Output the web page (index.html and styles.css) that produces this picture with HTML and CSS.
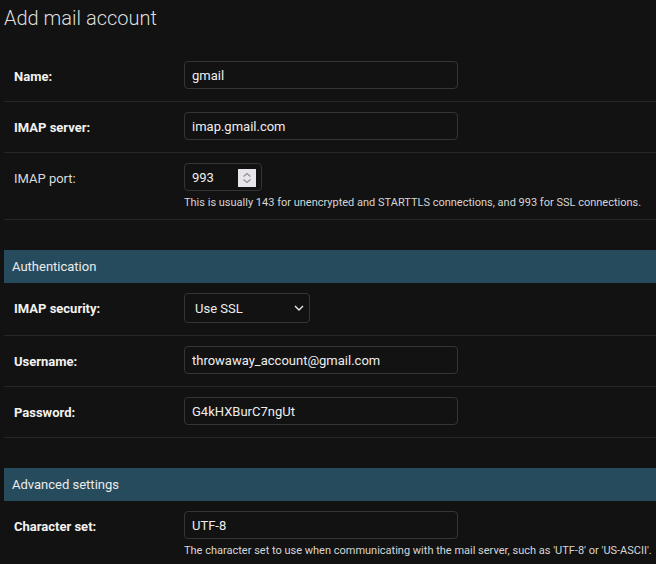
FILE: index.html
```html
<!DOCTYPE html>
<html lang="en">
<head>
<meta charset="utf-8">
<title>Add mail account</title>
<link rel="stylesheet" href="styles.css">
</head>
<body>
<div class="content">
  <h1 class="title">Add mail account</h1>
  <form>
    <fieldset class="module">
      <div class="form-row">
        <label class="required">Name:</label>
        <div class="field"><input class="text" type="text" value="gmail"></div>
      </div>
      <div class="form-row">
        <label class="required">IMAP server:</label>
        <div class="field"><input class="text" type="text" value="imap.gmail.com"></div>
      </div>
      <div class="form-row">
        <label>IMAP port:</label>
        <div class="field">
          <div class="number-wrap">
            <input class="text number" type="text" value="993">
            <span class="spinner">
              <svg width="18" height="18" viewBox="0 0 18 18"><path d="M5.5 7.5 9 4.5l3.5 3" fill="none" stroke="#8d8d93" stroke-width="1.2"/><path d="M5.5 10.5 9 13.5l3.5-3" fill="none" stroke="#8d8d93" stroke-width="1.2"/></svg>
            </span>
          </div>
          <div class="help">This is usually 143 for unencrypted and STARTTLS connections, and 993 for SSL connections.</div>
        </div>
      </div>
    </fieldset>

    <fieldset class="module">
      <h2 class="caption">Authentication</h2>
      <div class="form-row">
        <label class="required">IMAP security:</label>
        <div class="field field-tall">
          <div class="select-wrap">
            <select class="select"><option>Use SSL</option></select>
            <svg class="chevron" width="10" height="6" viewBox="0 0 10 6"><path d="M1 1l4 4 4-4" fill="none" stroke="#e8e8e8" stroke-width="1.4"/></svg>
          </div>
        </div>
      </div>
      <div class="form-row">
        <label class="required">Username:</label>
        <div class="field"><input class="text" type="text" value="throwaway_account@gmail.com"></div>
      </div>
      <div class="form-row">
        <label class="required">Password:</label>
        <div class="field"><input class="text" type="text" value="G4kHXBurC7ngUt"></div>
      </div>
    </fieldset>

    <fieldset class="module">
      <h2 class="caption">Advanced settings</h2>
      <div class="form-row">
        <label class="required">Character set:</label>
        <div class="field">
          <input class="text" type="text" value="UTF-8">
          <div class="help">The character set to use when communicating with the mail server, such as 'UTF-8' or 'US-ASCII'.</div>
        </div>
      </div>
    </fieldset>
  </form>
</div>
</body>
</html>
```
FILE: styles.css
```css
html, body {
  margin: 0;
  padding: 0;
  background: #121212;
  overflow: hidden;
}
body {
  font-family: Roboto, "Liberation Sans", sans-serif;
  color: #eeeeee;
}
.content {
  padding: 6px 0 0 4px;
  width: 720px;
}
.title {
  margin: 0 0 21px;
  font-size: 20px;
  line-height: 24px;
  font-weight: 300;
  color: #dedede;
}
.module {
  margin: 0 0 30px;
  padding: 0;
  border: 0;
  min-width: 0;
}
.caption {
  margin: 0;
  padding: 8px 8px;
  height: 17px;
  line-height: 17px;
  font-size: 13px;
  font-weight: 400;
  background: #264b5d;
  color: #ececec;
}
.form-row {
  display: flex;
  align-items: flex-start;
  padding: 10px;
  border-bottom: 1px solid #272727;
}
.form-row label {
  flex: 0 0 170px;
  width: 170px;
  padding-top: 2px;
  line-height: 28px;
  font-size: 13px;
  color: #dadada;
}
.form-row label.required {
  font-weight: 700;
  color: #f2f2f2;
}
.field {
  min-height: 30px;
}
.field-tall {
  min-height: 32px;
}
.text {
  box-sizing: border-box;
  display: block;
  width: 274px;
  height: 28px;
  margin: 0;
  padding: 1px 7px 0;
  font-family: Roboto, "Liberation Sans", sans-serif;
  font-size: 13px;
  color: #eeeeee;
  background: #121212;
  border: 1px solid #353535;
  border-radius: 4px;
  outline: none;
}
.number-wrap {
  position: relative;
  width: 78px;
}
.text.number {
  width: 78px;
}
.spinner {
  position: absolute;
  left: 54px;
  top: 6px;
  width: 18px;
  height: 18px;
  background: #e7e5ea;
  display: block;
}
.spinner svg {
  display: block;
}
.help {
  margin-top: 5px;
  font-size: 11px;
  line-height: 13px;
  color: #d6d6d6;
  white-space: nowrap;
}
.select-wrap {
  position: relative;
  width: 126px;
}
.select {
  box-sizing: border-box;
  display: block;
  width: 126px;
  height: 30px;
  margin: 0;
  padding: 0 24px 0 10px;
  -webkit-appearance: none;
  appearance: none;
  font-family: Roboto, "Liberation Sans", sans-serif;
  font-size: 13px;
  color: #eeeeee;
  background: #121212;
  border: 1px solid #353535;
  border-radius: 4px;
  outline: none;
}
.chevron {
  position: absolute;
  right: 6px;
  top: 12px;
  pointer-events: none;
}
```
